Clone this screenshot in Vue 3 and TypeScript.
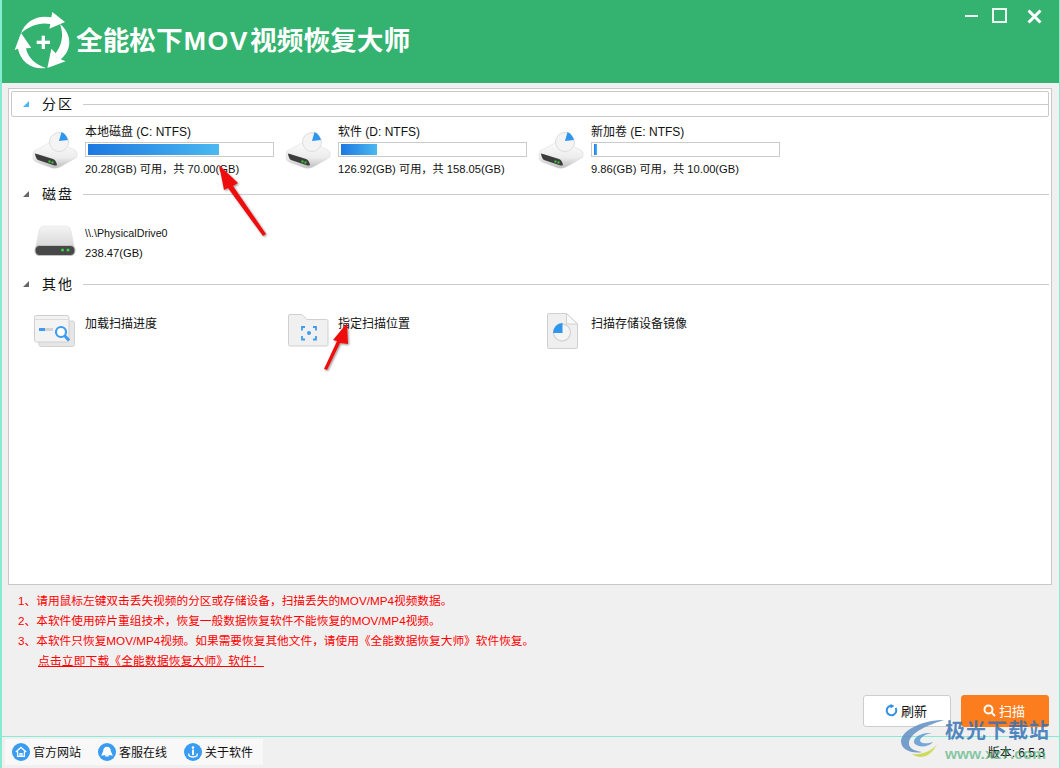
<script setup lang="ts">
interface Partition {
  name: string
  used: number
  info: string
}

const partitions: Partition[] = [
  { name: '本地磁盘 (C: NTFS)', used: 71, info: '20.28(GB) 可用，共 70.00(GB)' },
  { name: '软件 (D: NTFS)', used: 19.6, info: '126.92(GB) 可用，共 158.05(GB)' },
  { name: '新加卷 (E: NTFS)', used: 1.6, info: '9.86(GB) 可用，共 10.00(GB)' },
]

const tips = [
  '1、请用鼠标左键双击丢失视频的分区或存储设备，扫描丢失的MOV/MP4视频数据。',
  '2、本软件使用碎片重组技术，恢复一般数据恢复软件不能恢复的MOV/MP4视频。',
  '3、本软件只恢复MOV/MP4视频。如果需要恢复其他文件，请使用《全能数据恢复大师》软件恢复。',
]
</script>

<template>
  <div class="win">
    <header class="head">
      <svg class="logo" width="64" height="64" viewBox="0 0 192 192">
        <g fill="#fff">
          <path d="M33 76 C46 38 84 20 124 28 L127 12 L165 42 L118 62 L121 48 C90 42 60 52 33 76 Z" />
          <path d="M150 48 C184 76 190 124 152 154 L167 160 L112 180 L124 122 L137 136 C156 110 162 82 150 48 Z" />
          <path d="M108 180 C66 186 32 162 24 122 L14 126 L33 75 L64 120 L48 121 C54 150 76 170 108 180 Z" />
          <rect x="80" y="98" width="40" height="10" />
          <rect x="95" y="83" width="10" height="40" />
        </g>
      </svg>
      <h1 class="title">全能松下<span class="latin">MOV</span>视频恢复大师</h1>
      <div class="controls">
        <span class="min"></span>
        <span class="max"></span>
        <svg class="close" width="15" height="15" viewBox="0 0 15 15"><path d="M1.500 1.500 L13.500 13.500 M13.500 1.500 L1.500 13.500" stroke="#fff" stroke-width="3" /></svg>
      </div>
    </header>

    <main class="content">
      <section class="panel">
        <div class="sec-head first">
          <i class="tri blue"></i><span class="sec-title">分区</span><span class="rule"></span>
        </div>
        <div class="row">
          <div v-for="p in partitions" :key="p.name" class="item">
            <svg class="ico" width="48" height="44" viewBox="0 0 48 44">
              <defs>
                <linearGradient id="hdd" x1="0" y1="0" x2="0" y2="1">
                  <stop offset="0" stop-color="#fdfdfd" />
                  <stop offset=".6" stop-color="#ececec" />
                  <stop offset="1" stop-color="#bdbdbd" />
                </linearGradient>
              </defs>
              <path d="M4 24 L21 15 Q24 14 27 15 L45 23 Q48 25 47 28 L47 30 Q46 31 30 40 Q26 42 22 41 L6 35 Q2 33 3 28 Z" fill="url(#hdd)" stroke="#d8d8d8" stroke-width=".5" />
              <path d="M5 27 Q4 26 7 27 L23 32 Q26 33 27 38 Q26 39 23 38 L8 33 Q6 32 5 27 Z" fill="#3d3d3d" />
              <rect x="18.500" y="33.500" width="2" height="2" fill="#3cd03c" />
              <rect x="21.500" y="34.500" width="2" height="2" fill="#3cd03c" />
              <circle cx="29" cy="15" r="9.500" fill="#f4f4f4" stroke="#dedede" />
              <path d="M29 14 L31.500 5 Q36 7 38 13 Z" fill="#2f96ee" />
            </svg>
            <div class="info">
              <div class="name">{{ p.name }}</div>
              <div class="bar"><div class="fill" :style="{ width: p.used + '%' }"></div></div>
              <div class="sub">{{ p.info }}</div>
            </div>
          </div>
        </div>

        <div class="sec-head">
          <i class="tri"></i><span class="sec-title">磁盘</span><span class="rule"></span>
        </div>
        <div class="row">
          <div class="item">
            <svg class="ico" width="48" height="44" viewBox="0 0 48 44">
              <defs>
                <linearGradient id="disk" x1="0" y1="0" x2="0" y2="1">
                  <stop offset="0" stop-color="#f4f4f4" />
                  <stop offset="1" stop-color="#d4d4d4" />
                </linearGradient>
              </defs>
              <path d="M9 14 Q10 9 14 9 L36 9 Q40 9 41 14 L45 33 L5 33 Z" fill="url(#disk)" stroke="#e0e0e0" stroke-width=".5" />
              <rect x="5" y="28.500" width="40" height="10" rx="4.500" fill="#484848" stroke="#c4c4c4" />
              <circle cx="32.500" cy="33" r="1.500" fill="#3ad83a" />
              <circle cx="38" cy="33" r="1.500" fill="#3ad83a" />
            </svg>
            <div class="info disk">
              <div class="tiny">\\.\PhysicalDrive0</div>
              <div class="sub">238.47(GB)</div>
            </div>
          </div>
        </div>

        <div class="sec-head">
          <i class="tri"></i><span class="sec-title">其他</span><span class="rule"></span>
        </div>
        <div class="row">
          <div class="item">
            <svg class="ico" width="48" height="44" viewBox="0 0 48 44">
              <rect x="9" y="14" width="35.500" height="25.500" rx="2" fill="#e6e6e6" stroke="#d2d2d2" />
              <rect x="4.500" y="8.500" width="34.500" height="26.500" rx="2" fill="#f3f3f3" stroke="#cfcfcf" />
              <path d="M4.500 12.500 H39" stroke="#dcdcdc" />
              <rect x="9" y="21" width="6" height="3" fill="#3c9cf0" />
              <rect x="15" y="21" width="8" height="3" fill="#d4d4d4" />
              <circle cx="31" cy="25" r="5" fill="#fff" stroke="#3c9cf0" stroke-width="2.200" />
              <path d="M34.500 28.500 L39 33.500" stroke="#3c9cf0" stroke-width="3" />
            </svg>
            <div class="info plain"><div class="name">加载扫描进度</div></div>
          </div>
          <div class="item">
            <svg class="ico" width="48" height="44" viewBox="0 0 48 44">
              <path d="M5.500 9 Q5.500 7.500 7 7.500 L19 7.500 L24 12.500 L43.500 12.500 Q45 12.500 45 14 L45 37.500 Q45 39 43.500 39 L7 39 Q5.500 39 5.500 37.500 Z" fill="#f0f0f0" stroke="#d0d0d0" />
              <path d="M22 20 H19 V23.500 M30 20 H33 V23.500 M19 29 V32.500 H22 M33 29 V32.500 H30" fill="none" stroke="#3c9cf0" stroke-width="1.800" />
              <circle cx="26" cy="26" r="2" fill="#3c9cf0" />
            </svg>
            <div class="info plain"><div class="name">指定扫描位置</div></div>
          </div>
          <div class="item">
            <svg class="ico" width="48" height="44" viewBox="0 0 48 44">
              <path d="M13 6.500 L30.500 6.500 L41.500 17 L41.500 40 Q41.500 41.500 40 41.500 L13 41.500 Q11.500 41.500 11.500 40 L11.500 8 Q11.500 6.500 13 6.500 Z" fill="#efefef" stroke="#d0d0d0" />
              <path d="M30.500 6.500 L30.500 17 L41.500 17 Z" fill="#fafafa" stroke="#d0d0d0" />
              <circle cx="26" cy="25.500" r="8.500" fill="#f5f5f5" stroke="#d6d6d6" stroke-width="1.400" />
              <path d="M26.500 26 L26.500 16 Q18 16.500 17 26 Z" fill="#2f96ee" />
            </svg>
            <div class="info plain"><div class="name">扫描存储设备镜像</div></div>
          </div>
        </div>
      </section>

      <section class="tips">
        <p v-for="t in tips" :key="t">{{ t }}</p>
        <a class="link">点击立即下载《全能数据恢复大师》软件！</a>
      </section>

      <div class="actions">
        <button class="btn ghost">
          <svg width="13" height="13" viewBox="0 0 13 13">
            <path d="M10.600 4 A4.800 4.800 0 1 1 6.500 1.700" fill="none" stroke="#2f8fe6" stroke-width="2" />
            <path d="M5.500 0 L9.500 2 L5.500 4.500 Z" fill="#2f8fe6" />
          </svg>
          刷新
        </button>
        <button class="btn primary">
          <svg width="13" height="13" viewBox="0 0 13 13">
            <circle cx="5.500" cy="5.500" r="4" fill="none" stroke="#fff" stroke-width="2" />
            <path d="M8.500 8.500 L12 12" stroke="#fff" stroke-width="2" />
          </svg>
          扫描
        </button>
      </div>
    </main>

    <footer class="foot">
      <div class="links">
        <a class="flink">
          <svg width="18" height="18" viewBox="0 0 18 18">
            <circle cx="9" cy="9" r="9" fill="#3a9cf0" />
            <path d="M3.800 9 L9 4.400 L14.200 9 M5.600 8.400 V13.400 H12.400 V8.400 M8 13.400 V10.600 H10 V13.400" fill="none" stroke="#fff" stroke-width="1.300" />
          </svg>
          官方网站
        </a>
        <a class="flink">
          <svg width="18" height="18" viewBox="0 0 18 18">
            <circle cx="9" cy="9" r="9" fill="#3a9cf0" />
            <path d="M9 3.800 Q12.500 3.800 12.800 8 L14.800 12.800 L10.800 12 L10.800 13.600 L7.200 13.600 L7.200 12 L3.200 12.800 L5.200 8 Q5.500 3.800 9 3.800 Z" fill="#fff" />
          </svg>
          客服在线
        </a>
        <a class="flink">
          <svg width="18" height="18" viewBox="0 0 18 18">
            <circle cx="9" cy="9" r="9" fill="#3a9cf0" />
            <circle cx="9" cy="4.600" r="1.300" fill="#fff" />
            <rect x="8" y="6.600" width="2" height="5.400" fill="#fff" />
            <path d="M5 10.400 Q3.600 14 9 14 Q14.400 14 13 10.400" fill="none" stroke="#fff" stroke-width="1.300" />
          </svg>
          关于软件
        </a>
      </div>
      <span class="version">版本: 6.5.3</span>
    </footer>

    <!-- annotations pasted over the screenshot -->
    <svg class="arrows" width="1060" height="768" viewBox="0 0 1060 768">
      <defs>
        <filter id="shade" x="-50%" y="-50%" width="200%" height="200%">
          <feDropShadow dx="1" dy="1" stdDeviation="1.200" flood-color="#000" flood-opacity=".45" />
        </filter>
      </defs>
      <g fill="#ee1111" filter="url(#shade)">
        <path d="M219 165 L238 183 L233 186 L266 234 L263 236 L228 188 L224 190 Z" />
        <path d="M324 369 L327 370 L340 343 L348 344 L347 323 L333 340 L337 341 Z" />
      </g>
    </svg>
    <div class="mark">
      <svg width="45" height="40" viewBox="0 0 45 40">
        <path d="M44 1 C22 1 2 11 1 22 C1 31 12 35 22 33 C14 32 8 29 9 23 C11 13 28 6 44 1 Z" fill="#5f8fc4" opacity=".85" />
        <path d="M32 14 C20 13 11 20 15 25 C19 29 29 28 33 23 C27 25 20 25 20 21 C21 18 26 15 32 14 Z" fill="#4a8fd0" opacity=".75" />
        <path d="M12 35 C20 41 31 38 37 25 C32 32 22 36 12 35 Z" fill="#c9d84a" opacity=".9" />
      </svg>
      <div class="mark-text">
        <div class="mark-cn">极光下载站</div>
        <div class="mark-en">www.xz7.com</div>
      </div>
    </div>
  </div>
</template>

<style>
html,
body {
  margin: 0;
  background: #f0f0f0;
}
</style>

<style scoped>
.win {
  position: relative;
  width: 1060px;
  height: 768px;
  overflow: hidden;
  display: flex;
  flex-direction: column;
  box-sizing: border-box;
  background: #f0f0f0;
  border-left: 2px solid #85ecd2;
  border-right: 1px solid #85ecd2;
  font-family: "Liberation Sans", "Noto Sans CJK SC", sans-serif;
  font-size: 12px;
  color: #111;
}
.head {
  height: 83px;
  flex: none;
  margin: 0 -1px 0 -2px;
  display: flex;
  align-items: flex-start;
  background: #34b26f;
  padding-left: 10px;
  box-sizing: border-box;
}
.logo {
  margin-top: 8px;
}
.title {
  margin: 24px 0 0 2px;
  font-size: 26.700px;
  line-height: 34px;
  font-weight: 700;
  color: #fff;
}
.latin {
  margin: 0 1px;
  letter-spacing: 1.500px;
}
.controls {
  margin-left: auto;
  display: flex;
  align-items: flex-start;
  padding: 8px 18px 0 0;
}
.min {
  width: 13px;
  height: 2px;
  margin: 7px 14px 0 0;
  background: #f4f4f4;
}
.max {
  width: 11px;
  height: 11px;
  border: 2px solid #eef8f2;
  margin-right: 20px;
}
.close {
  margin-top: 1px;
}
.content {
  flex: 1;
  padding: 5px 7px 0 6px;
  display: flex;
  flex-direction: column;
  min-height: 0;
}
.panel {
  height: 497px;
  flex: none;
  box-sizing: border-box;
  background: #fff;
  border: 1px solid #c9c9c9;
  padding: 2px 2px 0;
}
.sec-head {
  height: 26px;
  display: flex;
  align-items: center;
  padding-left: 12px;
  box-sizing: border-box;
}
.sec-head.first {
  padding-left: 11px;
  border: 1px solid #c9c9c9;
  border-radius: 2px;
}
.tri {
  width: 0;
  height: 0;
  border-left: 6px solid transparent;
  border-bottom: 6px solid #666;
  margin-right: 13px;
}
.tri.blue {
  border-bottom-color: #4db4f5;
}
.sec-title {
  font-size: 14px;
  letter-spacing: 2px;
  width: 41px;
  margin-bottom: 2px;
}
.rule {
  flex: 1;
  height: 1px;
  background: #cbcbcb;
}
.row {
  height: 64px;
  display: flex;
  padding-left: 19px;
}
.item {
  width: 253px;
  display: flex;
  align-items: flex-start;
  padding-top: 7px;
  box-sizing: border-box;
}
.ico {
  flex: none;
  width: 48px;
  height: 44px;
  margin-top: 3px;
}
.info {
  margin-left: 7px;
}
.name {
  line-height: 16px;
}
.bar {
  width: 189px;
  height: 15px;
  margin: 2px 0 4px;
  padding: 1px;
  box-sizing: border-box;
  border: 1px solid #cbcbcb;
  background: #fff;
}
.fill {
  height: 100%;
  margin-left: 1px;
  background: linear-gradient(90deg, #1d78e0, #4ab8f0);
}
.sub {
  font-size: 11.200px;
  line-height: 16px;
}
.disk {
  padding-top: 11px;
}
.tiny {
  font-size: 10.700px;
  line-height: 16px;
  margin-bottom: 4px;
}
.plain {
  padding-top: 12px;
}
.tips {
  padding: 6px 0 0 10px;
  color: #f00;
  font-size: 11.700px;
  height: 100px;
  box-sizing: border-box;
}
.tips p {
  margin: 0;
  line-height: 20px;
}
.link {
  display: inline-block;
  margin: 0 0 0 20px;
  line-height: 19px;
  letter-spacing: 0.200px;
  text-decoration: underline;
  color: #f00;
}
.actions {
  display: flex;
  justify-content: flex-end;
  gap: 10px;
  padding: 10px 3px 0 0;
}
.btn {
  height: 32px;
  width: 88px;
  padding: 0 2px 2px 0;
  border-radius: 3px;
  font: inherit;
  font-size: 13px;
  display: flex;
  align-items: center;
  justify-content: center;
  gap: 3px;
  cursor: pointer;
}
.ghost {
  background: #fff;
  border: 1px solid #cdcdcd;
  color: #111;
}
.primary {
  background: #fb7d1e;
  border: 1px solid #fb7d1e;
  color: #fff;
}
.foot {
  height: 32px;
  flex: none;
  box-sizing: border-box;
  border-top: 1px solid #85ecd2;
  display: flex;
  align-items: center;
  padding: 0 14px 2px 3px;
}
.links {
  display: flex;
  height: 26px;
  align-items: center;
  gap: 9px;
  padding: 0 2px 0 7px;
  background: #f8f8f8;
}
.flink {
  display: flex;
  align-items: center;
  gap: 3px;
  width: 77px;
}
.version {
  margin-left: auto;
  font-size: 12px;
}
.arrows {
  position: absolute;
  left: -2px;
  top: 0;
  pointer-events: none;
}
.mark {
  position: absolute;
  left: 898px;
  top: 719px;
  display: flex;
  pointer-events: none;
}
.mark-cn {
  font-size: 20px;
  font-weight: 700;
  line-height: 24px;
  color: rgba(48, 110, 180, 0.82);
  letter-spacing: 1px;
}
.mark-en {
  margin-top: 1px;
  font-size: 15.500px;
  font-weight: 700;
  line-height: 20px;
  color: rgba(60, 170, 110, 0.6);
}
</style>
